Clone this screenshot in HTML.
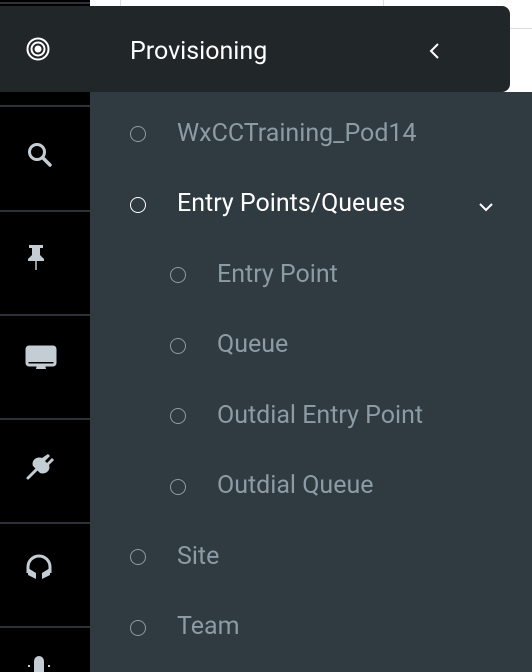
<!DOCTYPE html>
<html><head><meta charset="utf-8"><style>
body{margin:0;width:532px;height:672px;overflow:hidden;background:#fff;font-family:"Roboto","Liberation Sans",sans-serif;position:relative}
.side{position:absolute;left:0;top:0;width:90px;height:672px;background:#000}
.sep{position:absolute;left:0;width:90px;height:2px;background:#2c3338}
.hdr{position:absolute;left:0;top:6px;width:510px;height:86px;background:#212629;border-radius:0 8px 8px 0}
.sub{position:absolute;left:90px;top:92px;width:442px;height:580px;background:#303a41}
.item{position:absolute;font-size:25px;color:#8d9ba4;white-space:nowrap;line-height:30px}
.c{position:absolute;width:14px;height:14px;border:1.6px solid #8d9ba4;border-radius:50%}
</style></head><body>
<div style="position:absolute;left:120px;top:0;width:1px;height:6px;background:#ddd"></div>
<div style="position:absolute;left:383px;top:0;width:1px;height:6px;background:#ddd"></div>
<div style="position:absolute;left:510px;top:28px;width:22px;height:1px;background:#ddd"></div>
<div class="side"></div>
<div class="sep" style="top:2px"></div>
<div class="sep" style="top:105px"></div>
<div class="sep" style="top:210px"></div>
<div class="sep" style="top:314px"></div>
<div class="sep" style="top:418px"></div>
<div class="sep" style="top:522px"></div>
<div class="sep" style="top:626px"></div>
<div class="hdr"></div>
<svg style="position:absolute;left:26px;top:37px" width="24" height="24"><circle cx="12" cy="12" r="10.5" fill="none" stroke="#fff" stroke-width="2"/><circle cx="12" cy="12" r="6.5" fill="none" stroke="#fff" stroke-width="2"/><circle cx="12" cy="12" r="3.5" fill="#fff"/></svg>
<div style="position:absolute;left:130px;top:37px;font-size:25px;color:#fff;line-height:30px">Provisioning</div>
<svg style="position:absolute;left:428px;top:42px" width="14" height="18"><path d="M10 2 L3 9 L10 16" fill="none" stroke="#fff" stroke-width="2"/></svg>
<svg style="position:absolute;left:26px;top:141px" width="28" height="28"><circle cx="11" cy="11" r="7.5" fill="none" stroke="#c4cdd3" stroke-width="3"/><path d="M16.5 16.5 L24 24" stroke="#c4cdd3" stroke-width="3.5" stroke-linecap="round"/></svg>
<svg style="position:absolute;left:27px;top:243px" width="20" height="30"><path d="M2 2 H16 V5 H13 V12 L17 16 V18 H1 V16 L5 12 V5 H2 Z" fill="#c4cdd3"/><path d="M9 18 V27" stroke="#c4cdd3" stroke-width="1.5"/></svg>
<svg style="position:absolute;left:24px;top:345px" width="34" height="28"><rect x="3" y="2" width="28" height="18" rx="2" fill="none" stroke="#c4cdd3" stroke-width="3"/><rect x="3" y="2" width="28" height="15" fill="#c4cdd3"/><path d="M13 20 H21 L22 24 H12 Z" fill="#c4cdd3"/></svg>
<svg style="position:absolute;left:25px;top:448px" width="30" height="34"><path d="M8 18 C6 12 12 8 17 10 L23 6 L25 8 L20 13 L22 15 L27 10 L29 12 L24 17 C26 22 21 27 15 25 Z" fill="#c4cdd3"/><path d="M11 22 L3 30" stroke="#c4cdd3" stroke-width="3" stroke-linecap="round"/></svg>
<svg style="position:absolute;left:24px;top:553px" width="30" height="28"><path d="M4 20 V14 A11 11 0 0 1 26 14 V20" fill="none" stroke="#c4cdd3" stroke-width="3"/><path d="M4 15 L12 20 L12 26 L4 22 Z M26 15 L18 20 L18 26 L26 22 Z" fill="#c4cdd3"/></svg>
<svg style="position:absolute;left:27px;top:655px" width="24" height="17"><rect x="7" y="1" width="10" height="20" rx="5" fill="#c4cdd3"/><path d="M2 10 V12 M22 10 V12" stroke="#c4cdd3" stroke-width="2"/></svg>
<div class="sub"></div>
<div class="c" style="left:130px;top:126px"></div><div class="item" style="left:177px;top:119px">WxCCTraining_Pod14</div>
<div class="c" style="left:130px;top:197px;border-color:#fff"></div><div class="item" style="left:177px;top:189px;color:#fff">Entry Points/Queues</div>
<svg style="position:absolute;left:478px;top:201px" width="16" height="12"><path d="M2 3 L8 9 L14 3" fill="none" stroke="#fff" stroke-width="2"/></svg>
<div class="c" style="left:170px;top:267px"></div><div class="item" style="left:217px;top:260px">Entry Point</div>
<div class="c" style="left:170px;top:338px"></div><div class="item" style="left:217px;top:330px">Queue</div>
<div class="c" style="left:170px;top:408px"></div><div class="item" style="left:217px;top:401px">Outdial Entry Point</div>
<div class="c" style="left:170px;top:479px"></div><div class="item" style="left:217px;top:471px">Outdial Queue</div>
<div class="c" style="left:130px;top:549px"></div><div class="item" style="left:177px;top:542px">Site</div>
<div class="c" style="left:130px;top:620px"></div><div class="item" style="left:177px;top:612px">Team</div>
</body></html>
